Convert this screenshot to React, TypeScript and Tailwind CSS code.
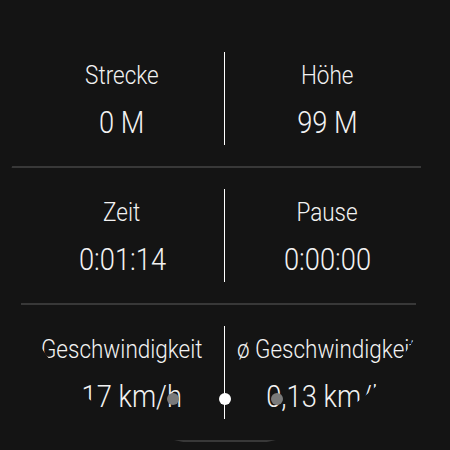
import React from "react";

function Cell({ label, value }: { label: React.ReactNode; value: string }) {
  return (
    <div className="flex-1 flex flex-col items-center pt-[11px] whitespace-nowrap">
      <div className="text-[25px] leading-none scale-x-[0.9]">{label}</div>
      <div className="mt-[19px] text-[31px] leading-none scale-x-[0.88]">{value}</div>
    </div>
  );
}

function Row({ a, b }: { a: [React.ReactNode, string]; b: [React.ReactNode, string] }) {
  return (
    <div className="flex pl-[20px] pr-[21px]">
      <Cell label={a[0]} value={a[1]} />
      <div className="w-px h-[93px] bg-white" />
      <Cell label={b[0]} value={b[1]} />
    </div>
  );
}

export default function App() {
  return (
    <div className="relative w-[450px] h-[450px] overflow-hidden bg-[#141414] text-[#f2f2f2] font-['Roboto',sans-serif] font-light">
      <div className="h-full pt-[52px] [clip-path:circle(221px_at_225px_225px)]">
        <Row a={["Strecke", "0 M"]} b={["Höhe", "99 M"]} />
        <div className="my-[21px] ml-[10px] w-[411px] h-[2px] bg-[#383838]" />
        <Row a={["Zeit", "0:01:14"]} b={["Pause", "0:00:00"]} />
        <div className="my-[21px] ml-[21px] w-[395px] h-[2px] bg-[#383838]" />
        <Row a={["Geschwindigkeit", "0,17 km/h"]} b={["ø Geschwindigkeit", "0,13 km/h"]} />
        <div className="my-[21px] ml-[21px] w-[395px] h-[2px] bg-[#383838]" />
      </div>
      <div className="absolute left-[167px] top-[393px] flex items-center gap-[40px]">
        <div className="w-[12px] h-[12px] rounded-full bg-[#7a7a7a]" />
        <div className="w-[12px] h-[12px] rounded-full bg-white" />
        <div className="w-[12px] h-[12px] rounded-full bg-[#7a7a7a]" />
      </div>
    </div>
  );
}
